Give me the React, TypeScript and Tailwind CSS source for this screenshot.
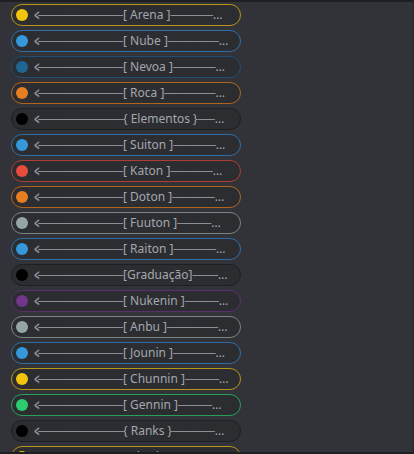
import React from "react";

type Role = { name: string; dot: string; border: string; curly?: boolean; tight?: boolean };

const roles: Role[] = [
  { name: "Arena", dot: "#f1c40f", border: "#b8941a" },
  { name: "Nube", dot: "#3498db", border: "#2f6fa6" },
  { name: "Nevoa", dot: "#206694", border: "#1f4f72" },
  { name: "Roca", dot: "#e67e22", border: "#b0651f" },
  { name: "Elementos", dot: "#000000", border: "#1e1f22", curly: true },
  { name: "Suiton", dot: "#3498db", border: "#2f6fa6" },
  { name: "Katon", dot: "#e74c3c", border: "#b03d31" },
  { name: "Doton", dot: "#e67e22", border: "#b0651f" },
  { name: "Fuuton", dot: "#95a5a6", border: "#7a8585" },
  { name: "Raiton", dot: "#3498db", border: "#2f6fa6" },
  { name: "Graduação", dot: "#000000", border: "#1e1f22", tight: true },
  { name: "Nukenin", dot: "#71368a", border: "#5a2f6c" },
  { name: "Anbu", dot: "#95a5a6", border: "#7a8585" },
  { name: "Jounin", dot: "#3498db", border: "#2f6fa6" },
  { name: "Chunnin", dot: "#f1c40f", border: "#b8941a" },
  { name: "Gennin", dot: "#2ecc71", border: "#27a05a" },
  { name: "Ranks", dot: "#000000", border: "#1e1f22", curly: true },
  { name: "Sharingan", dot: "#f1c40f", border: "#b8941a" },
];

const dash = "─".repeat(10);

function label(r: Role) {
  const open = r.curly ? "{" : "[";
  const close = r.curly ? "}" : "]";
  const inner = r.tight ? `${open}${r.name}${close}` : `${open} ${r.name} ${close}`;
  return `${dash}${inner}${dash}`;
}

export default function App() {
  return (
    <div className="w-[414px] h-[454px] bg-[#313338] overflow-hidden relative border-t-2 border-t-[#1e1f22] border-b-2 border-b-[#1e1f22] border-r-2 border-r-[#2b2d31]">
      <div className="flex flex-col gap-[4px] pt-[2px] pl-[11px]">
        {roles.map((r) => (
          <div
            key={r.name}
            className="w-[230px] h-[22px] shrink-0 rounded-full border flex items-center pl-[4px] pr-[11px] bg-[#2b2d31] font-['Noto_Sans',sans-serif] text-[12px] leading-[16px] text-[#a3a7ae]"
            style={{ borderColor: r.border }}
          >
            <span className="w-[12px] h-[12px] rounded-full shrink-0" style={{ backgroundColor: r.dot }} />
            <span className="ml-[6px] -mr-[2px] shrink-0 w-[6px] text-[16px] leading-[16px] font-bold text-[#8e939b] scale-x-[0.6] origin-left">&lt;</span>
            <span className="truncate">{label(r)}</span>
          </div>
        ))}
      </div>
    </div>
  );
}
